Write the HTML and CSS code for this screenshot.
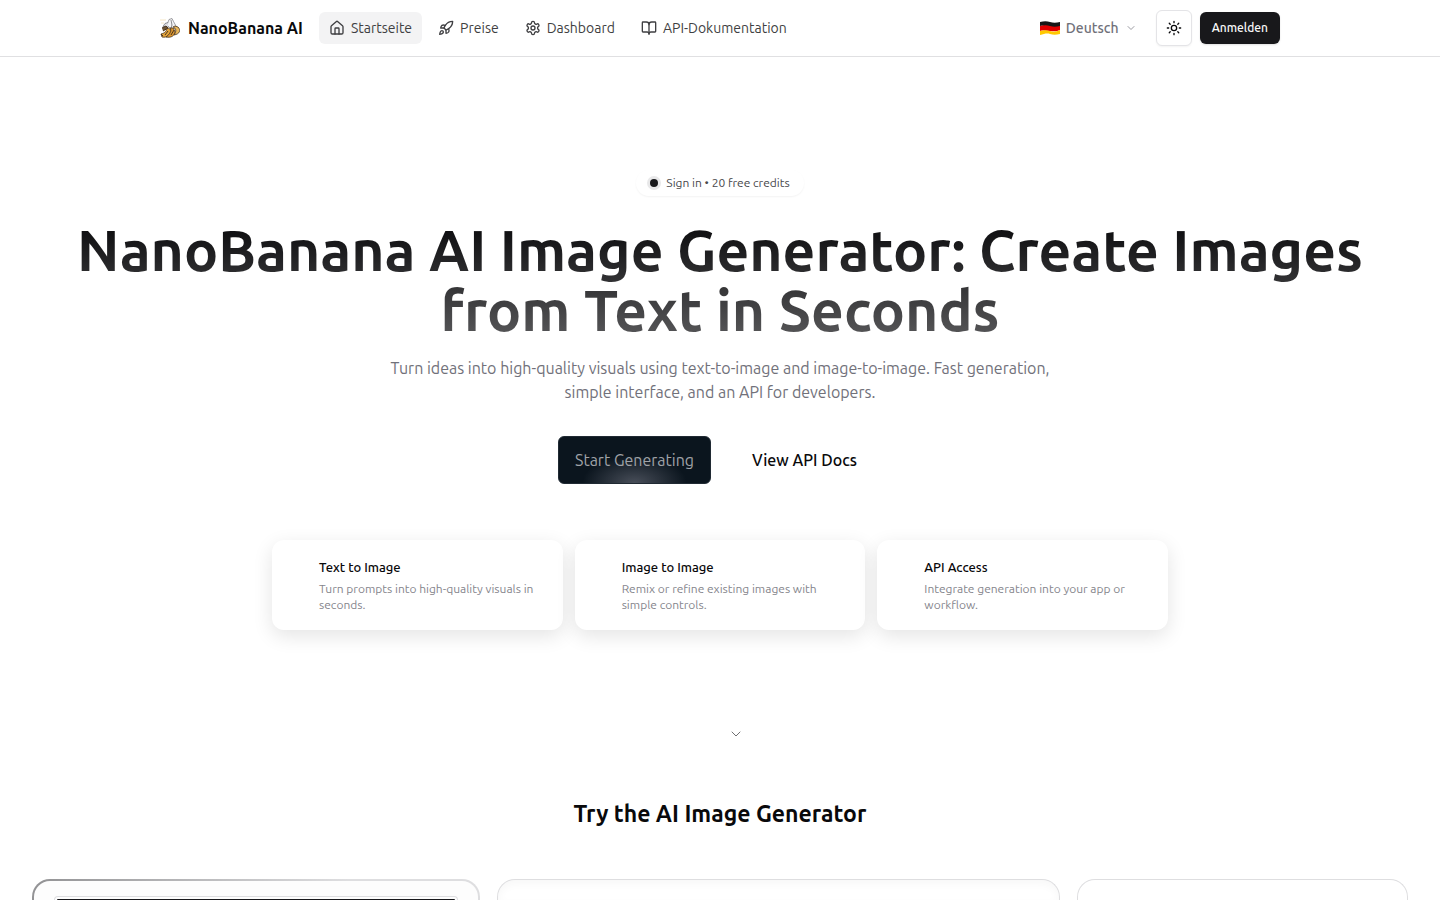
FILE: index.html
```html
<!DOCTYPE html>
<html lang="de">
<head>
<meta charset="utf-8">
<meta name="viewport" content="width=device-width, initial-scale=1">
<title>NanoBanana AI</title>
<link rel="stylesheet" href="styles.css">
</head>
<body>
<header class="header">
  <div class="header-inner">
    <a class="brand" href="#">
      <svg class="brand-logo" viewBox="0 0 20 20" aria-hidden="true">
        <path d="M0 2h6M1 5h3" stroke="#f3dfb8" stroke-width=".8"/>
        <path d="M7 7 9 1.500l3-1 1.500 3L16 8l-2 3-4-1z" fill="#f4f4f5" stroke="#77777c" stroke-width=".7"/>
        <path d="m11 2 1 5-1 4M8 4.500l-3 1-2 3 5 1" fill="#dedee2" stroke="#66666a" stroke-width=".7"/>
        <path d="M7 9c0 4-2 6-6 7l1 3c5 1 8-2 9-7z" fill="#e5a43a" stroke="#49351f" stroke-width=".8"/>
        <path d="M10 10c2 3 0 6-4 9 5 1 9-1 9-6l-2-3z" fill="#dc962d" stroke="#49351f" stroke-width=".8"/>
        <path d="M13 9c3 1 4 4 1 8 6-1 7-5 4-8l-3-1z" fill="#e9b75a" stroke="#49351f" stroke-width=".8"/>
        <path d="m2 10 4-2 2 2-5 3M1 16l2 2M8 13l-3 4M14 12l-3 5" fill="#6d5435" stroke="#49351f"/>
      </svg>
      <span>NanoBanana AI</span>
    </a>
    <nav class="nav">
      <a class="nav-link nav-link-active" href="#"><svg class="icon" viewBox="0 0 24 24"><path d="M15 21v-8a1 1 0 0 0-1-1h-4a1 1 0 0 0-1 1v8"/><path d="M3 10a2 2 0 0 1 .709-1.528l7-6a2 2 0 0 1 2.582 0l7 6A2 2 0 0 1 21 10v9a2 2 0 0 1-2 2H5a2 2 0 0 1-2-2z"/></svg>Startseite</a>
      <a class="nav-link" href="#"><svg class="icon" viewBox="0 0 24 24"><path d="M4.500 16.500c-1.500 1.260-2 5-2 5s3.740-.5 5-2c.71-.84.7-2.130-.09-2.910a2.180 2.180 0 0 0-2.910-.09z"/><path d="m12 15-3-3a22 22 0 0 1 2-3.950A12.880 12.880 0 0 1 22 2c0 2.720-.78 7.500-6 11a22.350 22.350 0 0 1-4 2z"/><path d="M9 12H4s.55-3.030 2-4c1.620-1.080 5 0 5 0"/><path d="M12 15v5s3.030-.55 4-2c1.080-1.620 0-5 0-5"/></svg>Preise</a>
      <a class="nav-link" href="#"><svg class="icon" viewBox="0 0 24 24"><path d="M12.220 2h-.44a2 2 0 0 0-2 2v.18a2 2 0 0 1-1 1.730l-.43.25a2 2 0 0 1-2 0l-.15-.08a2 2 0 0 0-2.730.73l-.22.38a2 2 0 0 0 .73 2.730l.15.1a2 2 0 0 1 1 1.720v.51a2 2 0 0 1-1 1.740l-.15.09a2 2 0 0 0-.73 2.730l.22.38a2 2 0 0 0 2.730.73l.15-.08a2 2 0 0 1 2 0l.43.25a2 2 0 0 1 1 1.730V20a2 2 0 0 0 2 2h.44a2 2 0 0 0 2-2v-.18a2 2 0 0 1 1-1.730l.43-.25a2 2 0 0 1 2 0l.15.08a2 2 0 0 0 2.730-.73l.22-.39a2 2 0 0 0-.73-2.730l-.15-.08a2 2 0 0 1-1-1.740v-.5a2 2 0 0 1 1-1.740l.15-.09a2 2 0 0 0 .73-2.730l-.22-.38a2 2 0 0 0-2.730-.73l-.15.08a2 2 0 0 1-2 0l-.43-.25a2 2 0 0 1-1-1.730V4a2 2 0 0 0-2-2z"/><circle cx="12" cy="12" r="3"/></svg>Dashboard</a>
      <a class="nav-link" href="#"><svg class="icon" viewBox="0 0 24 24"><path d="M12 7v14"/><path d="M3 18a1 1 0 0 1-1-1V4a1 1 0 0 1 1-1h5a4 4 0 0 1 4 4 4 4 0 0 1 4-4h5a1 1 0 0 1 1 1v13a1 1 0 0 1-1 1h-6a3 3 0 0 0-3 3 3 3 0 0 0-3-3z"/></svg>API-Dokumentation</a>
    </nav>
    <div class="actions">
      <div class="language">
        <svg class="flag" viewBox="0 0 20 16" aria-hidden="true">
          <path d="M0 2c4-1 7-1 10 0s6 1 10 0v5c-4 1-7 0-10 0S4 5 0 6z" fill="#161616"/>
          <path d="M0 6c4-1 7-1 10 0s6 1 10 0v4c-4 2-7 1-10 1s-6-1-10 0z" fill="#e00000"/>
          <path d="M0 11c4-1 7-1 10 0s6 1 10-1v4c-4 1-7 1-10 0s-6 0-10 1z" fill="#ffc800"/>
        </svg>
        <select class="language-select" aria-label="Sprache"><option>Deutsch</option></select>
        <svg class="icon language-arrow" viewBox="0 0 24 24"><path d="m6 9 6 6 6-6"/></svg>
      </div>
      <button class="theme-button" type="button" aria-label="Farbschema wechseln"><svg class="icon" viewBox="0 0 24 24"><circle cx="12" cy="12" r="4"/><path d="M12 2v2M12 20v2M4.900 4.900l1.400 1.400M17.700 17.700l1.400 1.400M2 12h2M20 12h2M6.300 17.700l-1.400 1.400M19.100 4.900l-1.400 1.400"/></svg></button>
      <button class="login-button" type="button">Anmelden</button>
    </div>
  </div>
</header>
<main>
  <section class="hero">
    <div class="badge"><span class="badge-dot"></span>Sign in • 20 free credits</div>
    <h1 class="hero-title">NanoBanana AI Image Generator: Create Images from Text in Seconds</h1>
    <p class="hero-text">Turn ideas into high-quality visuals using text-to-image and image-to-image. Fast generation, simple interface, and an API for developers.</p>
    <div class="hero-buttons">
      <button class="start-button" type="button">Start Generating</button>
      <a class="docs-link" href="#">View API Docs</a>
    </div>
    <div class="features">
      <article class="feature"><h2 class="feature-title">Text to Image</h2><p class="feature-text">Turn prompts into high-quality visuals in seconds.</p></article>
      <article class="feature"><h2 class="feature-title">Image to Image</h2><p class="feature-text">Remix or refine existing images with simple controls.</p></article>
      <article class="feature"><h2 class="feature-title">API Access</h2><p class="feature-text">Integrate generation into your app or workflow.</p></article>
    </div>
    <a class="scroll-link" href="#generator" aria-label="Scroll down"><svg class="icon" viewBox="0 0 24 24"><path d="m6 9 6 6 6-6"/></svg></a>
  </section>
  <section class="generator" id="generator">
    <h2 class="generator-title">Try the AI Image Generator</h2>
    <div class="panels">
      <div class="panel panel-accent"><div class="panel-preview"></div></div>
      <div class="panel panel-shaded"></div>
      <div class="panel"></div>
    </div>
  </section>
</main>
</body>
</html>
```
FILE: styles.css
```css
* { box-sizing: border-box; }
body {
  display: flex;
  flex-direction: column;
  margin: 0;
  height: 100vh;
  overflow: hidden;
  background: #fff;
  color: #09090b;
  font-family: Ubuntu, "Noto Sans", "Open Sans", sans-serif;
  font-size: 14px;
  line-height: 20px;
}
h1, h2, p { margin: 0; }
a { color: inherit; text-decoration: none; }
button, select { font: inherit; }
main { display: flex; flex-direction: column; flex: 1; min-height: 0; }
.icon {
  width: 16px;
  height: 16px;
  flex: none;
  fill: none;
  stroke: currentColor;
  stroke-width: 2;
  stroke-linecap: round;
  stroke-linejoin: round;
}
.header { flex: none; border-bottom: 1px solid #e0e0e2; }
.header-inner {
  display: flex;
  align-items: center;
  max-width: 1120px;
  height: 56px;
  margin: 0 auto;
}
.brand {
  display: flex;
  align-items: center;
  gap: 8px;
  margin-right: 16px;
  font-size: 16px;
  font-weight: 600;
  white-space: nowrap;
}
.brand-logo { width: 20px; height: 20px; fill: none; }
.nav { display: flex; gap: 6px; }
.nav-link {
  display: flex;
  align-items: center;
  gap: 6px;
  height: 32px;
  padding: 0 10px;
  border-radius: 6px;
  color: #3f3f42;
  white-space: nowrap;
}
.nav-link-active { background: #f3f3f4; }
.actions { display: flex; align-items: center; gap: 8px; margin-left: auto; }
.language { display: flex; align-items: center; gap: 6px; margin-right: 11px; color: #71717a; }
.flag { width: 20px; height: 16px; }
.language-select {
  appearance: none;
  padding: 0;
  border: 0;
  background: none;
  color: inherit;
  font-weight: 500;
}
.language-arrow { width: 12px; height: 12px; opacity: .7; }
.theme-button {
  display: grid;
  place-items: center;
  width: 36px;
  height: 36px;
  padding: 0;
  border: 1px solid #e4e4e7;
  border-radius: 6px;
  background: #fff;
  color: #09090b;
  box-shadow: 0 1px 2px #0000000d;
}
.login-button {
  height: 32px;
  padding: 0 12px;
  border: 0;
  border-radius: 6px;
  background: #18181b;
  color: #fafafa;
  font-size: 12px;
  font-weight: 500;
  box-shadow: 0 1px 2px #00000020;
}
.hero {
  display: flex;
  flex: none;
  flex-direction: column;
  align-items: center;
  padding: 113px 32px 0;
  text-align: center;
}
.badge {
  display: flex;
  align-items: center;
  gap: 8px;
  padding: 5px 14px;
  border-radius: 14px;
  color: #48484b;
  font-size: 12px;
  line-height: 16px;
  box-shadow: 0 1px 2px #0000000d;
}
.badge-dot { width: 8px; height: 8px; border-radius: 50%; background: #18181b; box-shadow: 0 0 0 3px #e8e8e9; }
.hero-title {
  margin-top: 24px;
  background: linear-gradient(#09090b, #58585a);
  background-clip: text;
  color: transparent;
  font-size: 57px;
  line-height: 60px;
  font-weight: 600;
}
.hero-text { max-width: 672px; margin-top: 16px; color: #71717a; font-size: 16px; line-height: 24px; }
.hero-buttons { display: flex; gap: 16px; margin-top: 32px; font-size: 16px; }
.start-button {
  height: 48px;
  padding: 0 16px;
  border: 1px solid #202a33;
  border-radius: 6px;
  background: radial-gradient(ellipse 52px 28px at 50% 100%, #484e59, #0b151e);
  color: #a0a3a8;
}
.docs-link { display: flex; align-items: center; padding: 0 25px; font-weight: 500; }
.features {
  display: grid;
  grid-template-columns: repeat(3, 1fr);
  gap: 12px;
  width: 100%;
  max-width: 896px;
  margin-top: 56px;
  text-align: left;
}
.feature { padding: 17px 24px 17px 47px; border-radius: 12px; background: #fff; box-shadow: 0 6px 20px #0000001c; }
.feature-title { font-size: 13px; line-height: 20px; font-weight: 500; }
.feature-text { margin-top: 4px; color: #85858c; font-size: 12px; line-height: 16px; }
.scroll-link { align-self: center; margin: 96px 0 0 32px; color: #27272a; }
.scroll-link .icon { display: block; stroke-width: 1; }
.generator { display: flex; flex: 1; flex-direction: column; min-height: 0; padding: 56px 32px 0; overflow: hidden; }
.generator-title { flex: none; text-align: center; font-size: 23px; line-height: 32px; font-weight: 600; }
.panels {
  display: grid;
  flex: 1;
  grid-template-columns: 448fr 562fr 331fr;
  gap: 17px;
  min-height: 0;
  margin-top: 49px;
}
.panel { border: 1px solid #dedee0; border-bottom: 0; border-radius: 18px 18px 0 0; }
.panel-accent {
  display: flex;
  padding: 15px 20px 0;
  border: 2px solid transparent;
  border-bottom: 0;
  background: linear-gradient(#fdfdfd, #fdfdfd) padding-box, linear-gradient(100deg, #929294, #dedee0 70%) border-box;
}
.panel-preview {
  flex: 1;
  padding: 2px 2px 0;
  border: 1px solid #dedee0;
  border-bottom: 0;
  border-radius: 10px 10px 0 0;
  background: linear-gradient(#18181b, #18181b) content-box;
}
.panel-shaded { box-shadow: inset 0 4px 8px #00000008; }
```
